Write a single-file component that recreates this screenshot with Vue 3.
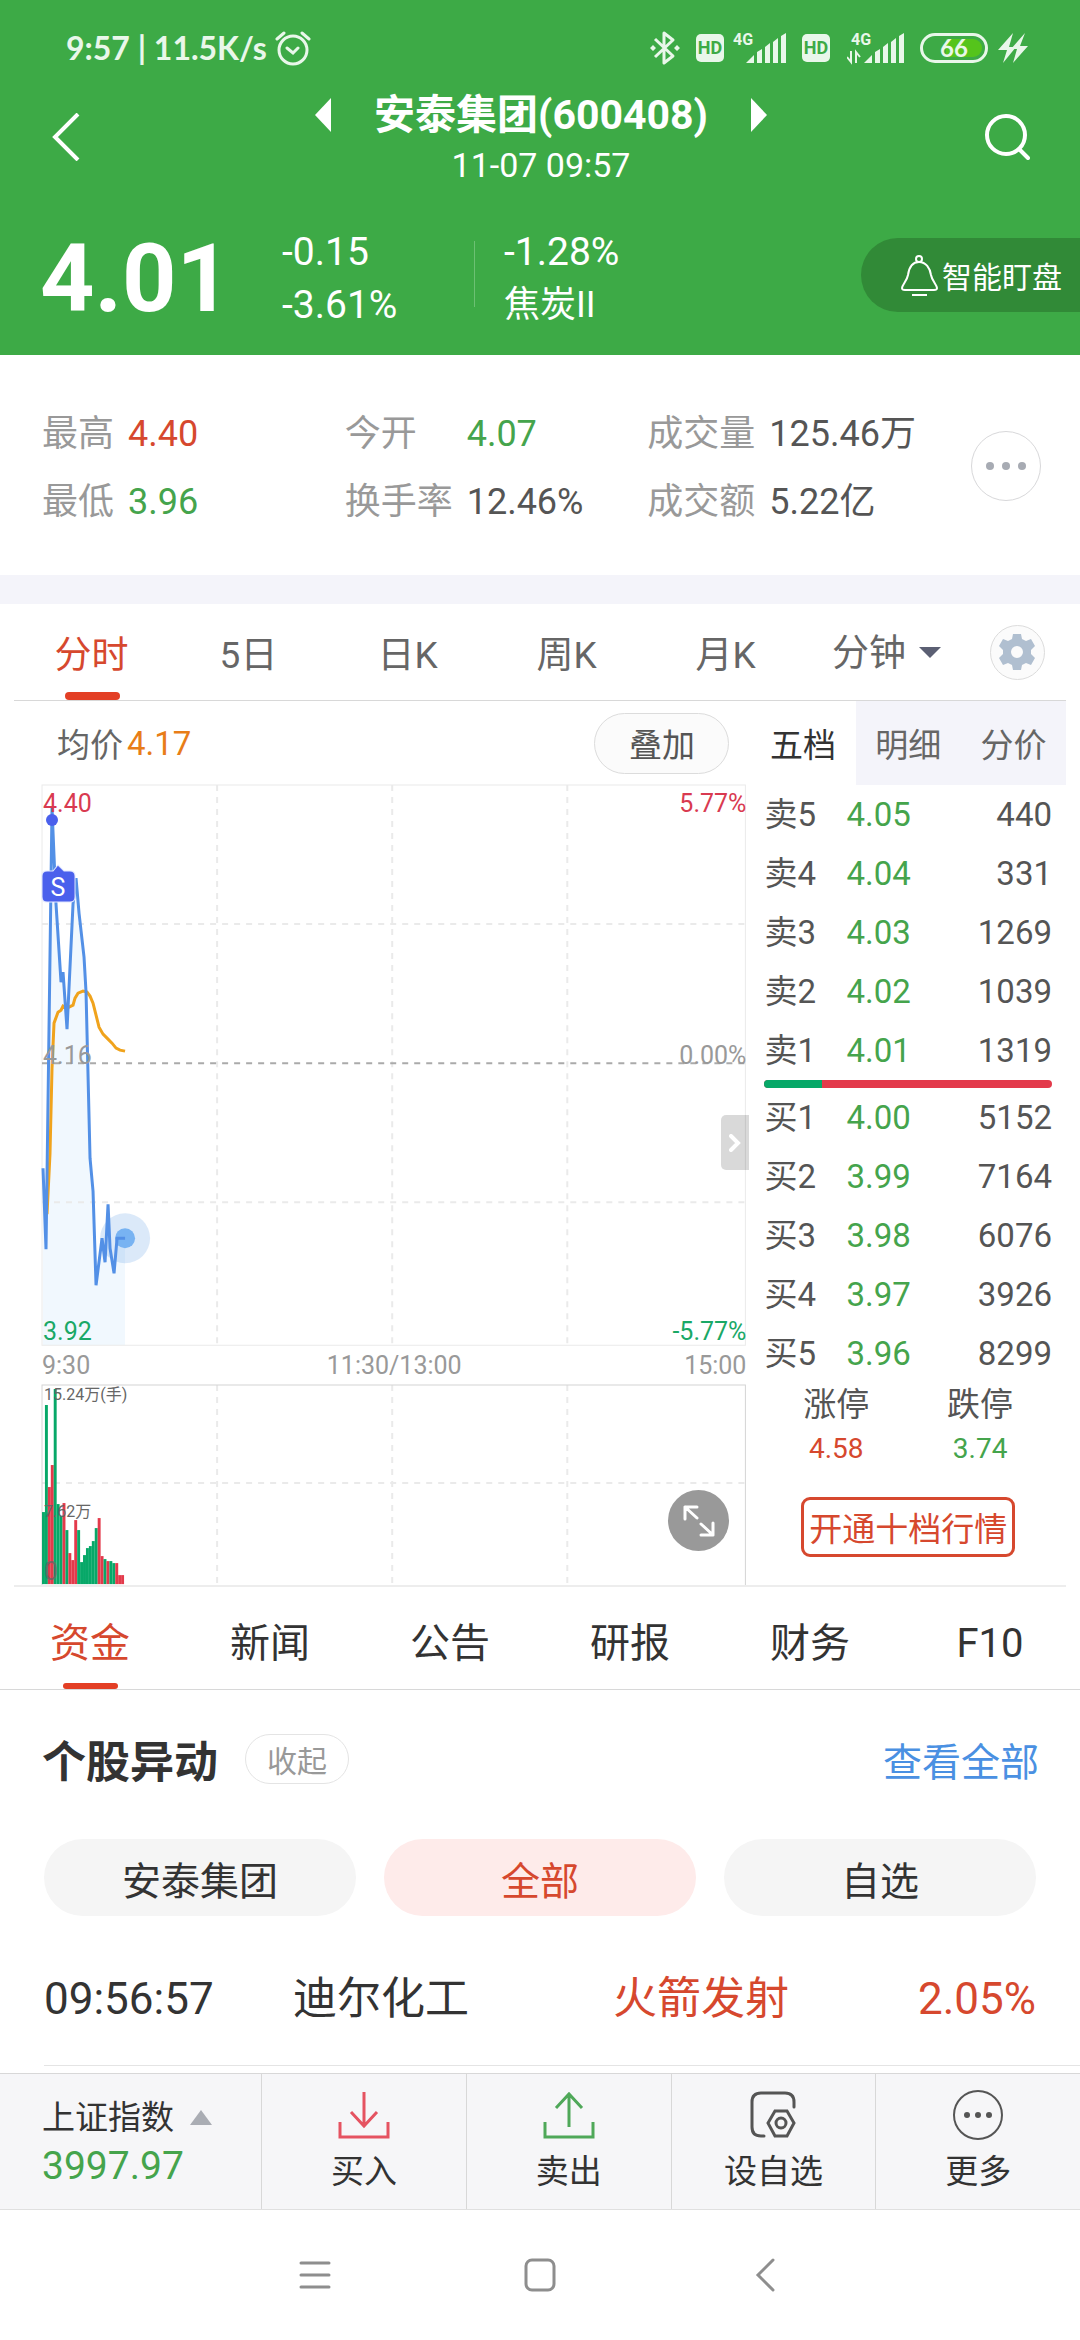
<script setup>
import { ref } from 'vue'

const stats = [
  [
    { label: '最高', value: '4.40', tone: 'up' },
    { label: '最低', value: '3.96', tone: 'down' }
  ],
  [
    { label: '今开', value: '4.07', tone: 'down' },
    { label: '换手率', value: '12.46%', tone: '' }
  ],
  [
    { label: '成交量', value: '125.46万', tone: '' },
    { label: '成交额', value: '5.22亿', tone: '' }
  ]
]

const periods = ['分时', '5日', '日K', '周K', '月K']
const period = ref('分时')

const bookTabs = ['五档', '明细', '分价']
const bookTab = ref('五档')

const asks = [
  ['卖5', '4.05', '440'],
  ['卖4', '4.04', '331'],
  ['卖3', '4.03', '1269'],
  ['卖2', '4.02', '1039'],
  ['卖1', '4.01', '1319']
]
const bids = [
  ['买1', '4.00', '5152'],
  ['买2', '3.99', '7164'],
  ['买3', '3.98', '6076'],
  ['买4', '3.97', '3926'],
  ['买5', '3.96', '8299']
]

// One bar per minute: [height, rising]
const volumes = [
  [72, 0], [179, 0], [97, 1], [119, 1], [195, 0], [80, 0], [68, 0], [81, 1],
  [54, 0], [31, 1], [24, 1], [64, 1], [54, 0], [22, 0], [29, 0], [36, 0],
  [38, 0], [43, 0], [56, 0], [66, 1], [28, 1], [25, 0], [23, 1], [23, 0],
  [21, 0], [21, 1], [9, 1], [9, 1]
]
const barWidth = 82 / volumes.length

const price =
  '1,383 4,464 10,23 14,119 19,197 21,187 25,244 31,119 34,93 37,128 42,172 44,207 48,373 51,406 54,500 60,453 63,477 66,419 68,463 72,488 75,453 83,453'
const average =
  '5,429 8,368 10,283 12,238 16,227 19,225 21,221 25,223 31,220 33,213 36,208 41,206 45,207 48,211 51,218 54,230 57,242 61,249 65,253 70,258 74,263 78,265 83,266'

const sections = ['资金', '新闻', '公告', '研报', '财务', 'F10']
const section = ref('资金')

const filters = ['安泰集团', '全部', '自选']
const filter = ref('全部')
</script>

<template>
  <div class="page">
    <header class="header">
      <div class="status">
        <span class="clock">9:57 | 11.5K/s</span>
        <svg class="alarm" width="36" height="36" viewBox="0 0 36 36" fill="none" stroke="#e9f7ea" stroke-width="3" stroke-linecap="round">
          <circle cx="18" cy="20" r="14" />
          <path d="M12 18l6 5 5-5M2 9l7-6M27 3l7 6" />
        </svg>
        <div class="status-icons">
          <svg width="30" height="36" viewBox="0 0 30 36" fill="none" stroke="#e9f7ea" stroke-width="3" stroke-linejoin="round">
            <path d="M5 9l18 17-9 7V3l9 7L5 27" />
            <path d="M3 15l3 3-3 3-3-3zM27 15l3 3-3 3-3-3z" fill="#e9f7ea" stroke="none" />
          </svg>
          <span class="hd">HD</span>
          <svg class="signal" width="53" height="36" viewBox="0 0 53 36" fill="#e9f7ea">
            <text x="0" y="15" class="net">4G</text>
            <path d="M13 33l8-8v8zM24 22l5-3v14h-5zM32 17l5-4v20h-5zM40 12l5-4v25h-5zM48 6l5-3v30h-5z" />
          </svg>
          <span class="hd">HD</span>
          <svg class="signal-b" width="57" height="36" viewBox="0 0 57 36" fill="#e9f7ea">
            <text x="4" y="15" class="net">4G</text>
            <path d="M17 33l8-8v8zM28 22l5-3v14h-5zM36 17l5-4v20h-5zM44 12l5-4v25h-5zM52 6l5-3v30h-5z" />
            <path d="M4 21v11l-4-5M9 33V22l4 5" fill="none" stroke="#e9f7ea" stroke-width="2" />
          </svg>
          <span class="battery"><b>66</b></span>
          <svg width="30" height="30" viewBox="0 0 30 30" fill="#e9f7ea">
            <path d="M15 0L0 17h9L5 30 18 14h-7zM27 0L13 16h6l-4 14 15-17h-8z" />
          </svg>
        </div>
      </div>

      <div class="titlebar">
        <button class="icon-btn" aria-label="返回">
          <svg width="28" height="48" viewBox="0 0 28 48" fill="none" stroke="#fff" stroke-width="4"><path d="M26 1L3 24l23 23" /></svg>
        </button>
        <div class="title">
          <div class="name">
            <button class="icon-btn" aria-label="上一只">
              <svg width="16" height="34" viewBox="0 0 16 34" fill="#fff"><path d="M16 0v34L0 17z" /></svg>
            </button>
            <h1>安泰集团(600408)</h1>
            <button class="icon-btn" aria-label="下一只">
              <svg width="16" height="34" viewBox="0 0 16 34" fill="#fff"><path d="M0 0v34l16-17z" /></svg>
            </button>
          </div>
          <time>11-07 09:57</time>
        </div>
        <button class="icon-btn" aria-label="搜索">
          <svg width="46" height="48" viewBox="0 0 46 48" fill="none" stroke="#fff" stroke-width="4" stroke-linecap="round">
            <circle cx="22" cy="22" r="19" /><path d="M35 36l9 9" />
          </svg>
        </button>
      </div>

      <div class="quote">
        <strong class="last">4.01</strong>
        <div class="pair"><span>-0.15</span><span>-3.61%</span></div>
        <div class="pair sector"><span>-1.28%</span><span class="small">焦炭II</span></div>
        <button class="watch">
          <svg width="37" height="42" viewBox="0 0 37 42" fill="none" stroke="#fff" stroke-width="2" stroke-linejoin="round">
            <circle cx="18" cy="5" r="3" />
            <path d="M18 8C11 8 8 14 7 21 6 27 1 31 1 34c0 2 1 2 3 2h29c2 0 3 0 3-2 0-3-5-7-6-13C29 14 25 8 18 8zM11 41h15" />
          </svg>
          智能盯盘
        </button>
      </div>
    </header>

    <section class="stats">
      <dl>
        <div v-for="(col, c) in stats" :key="c" class="stat-col" :class="{ wide: c > 0 }">
          <div v-for="s in col" :key="s.label" class="stat">
            <dt>{{ s.label }}</dt>
            <dd :class="s.tone">{{ s.value }}</dd>
          </div>
        </div>
      </dl>
      <button class="more" aria-label="更多数据">
        <svg width="42" height="10" viewBox="0 0 42 10" fill="#a7abb3"><circle cx="5" cy="5" r="4" /><circle cx="21" cy="5" r="4" /><circle cx="37" cy="5" r="4" /></svg>
      </button>
    </section>

    <section class="chart-card">
      <nav class="periods">
        <button v-for="p in periods" :key="p" :class="{ on: p === period }" @click="period = p">{{ p }}</button>
        <div class="minute">
          <select aria-label="分钟周期"><option>分钟</option></select>
          <svg width="22" height="11" viewBox="0 0 22 11" fill="#5b5f73"><path d="M0 0h22L11 11z" /></svg>
        </div>
        <div class="gear-cell">
          <button class="gear" aria-label="图表设置">
            <svg width="36" height="36" viewBox="0 0 36 36" fill="#b0bfd0" fill-rule="evenodd">
              <path d="M14 0h8l1 5 4 2 5-2 4 7-4 4v4l4 4-4 7-5-2-4 2-1 5h-8l-1-5-4-2-5 2-4-7 4-4v-4l-4-4 4-7 5 2 4-2zM18 12a6 6 0 1 0 0 12a6 6 0 1 0 0-12z" />
            </svg>
          </button>
        </div>
      </nav>

      <div class="board">
        <div class="left">
          <div class="avg">
            <span>均价</span>
            <em>4.17</em>
            <button class="overlay-btn">叠加</button>
          </div>

          <div class="plot">
            <svg viewBox="0 0 704 561" class="canvas">
              <polygon :points="price + ' 83,560 1,560'" fill="#f1f8fe" />
              <g fill="none" stroke="#eaeaea" stroke-width="1">
                <path d="M0 560V0H703V560z" />
                <g stroke-width="2">
                  <path d="M0 139H703M0 417H703" stroke-dasharray="6 6" />
                  <path d="M175 0V560M350 0V560M525 0V560" stroke-dasharray="6 6" />
                </g>
                <path d="M0 278H703" stroke="#aaa" stroke-width="2" stroke-dasharray="6 6" />
              </g>
              <circle cx="83" cy="453" r="25" fill="#4a90e2" opacity="0.2" />
              <circle cx="83" cy="453" r="10" fill="#78b3f2" />
              <polyline :points="average" fill="none" stroke="#f0a31c" stroke-width="3" />
              <polyline :points="price" fill="none" stroke="#5390e6" stroke-width="3" />
              <circle cx="10" cy="35" r="6" fill="#4a60ec" />
              <path d="M5 86h6l5-6 6 6h6q5 0 5 5v21q0 5-5 5H5q-5 0-5-5V91q0-5 5-5z" fill="#4a60ec" stroke="#dfe6ff" stroke-width="1" />
              <text x="16" y="111" class="axis" text-anchor="middle" fill="#fff">S</text>
              <g class="axis">
                <text x="1" y="27" fill="#d93a50">4.40</text>
                <text x="1" y="279" fill="#999">4.16</text>
                <text x="1" y="555" fill="#1aa866">3.92</text>
                <g text-anchor="end">
                  <text x="704" y="27" fill="#d93a50">5.77%</text>
                  <text x="704" y="279" fill="#999">0.00%</text>
                  <text x="704" y="555" fill="#1aa866">-5.77%</text>
                </g>
              </g>
            </svg>
            <button class="handle" aria-label="收起盘口">
              <svg width="12" height="18" viewBox="0 0 12 18" fill="none" stroke="#fff" stroke-width="4" stroke-linecap="round"><path d="M2 2l7 7-7 7" /></svg>
            </button>
          </div>

          <div class="times"><span>9:30</span><span>11:30/13:00</span><span>15:00</span></div>

          <div class="plot">
            <svg viewBox="0 0 704 200" class="canvas">
              <g fill="none" stroke="#eaeaea" stroke-width="2">
                <path d="M0 98H703" stroke-dasharray="6 6" />
                <path d="M175 0V200M350 0V200M525 0V200" stroke-dasharray="6 6" />
                <path d="M0 200V0H703V200" stroke="#d4d4d4" stroke-width="1" />
              </g>
              <rect
                v-for="(v, i) in volumes"
                :key="i"
                :x="i * barWidth"
                :y="199 - v[0]"
                :width="barWidth"
                :height="v[0]"
                :fill="v[1] ? '#e33a4b' : '#07a868'"
              />
              <g class="vol-text" fill="#666">
                <text x="2" y="15">15.24万(手)</text>
                <text x="2" y="132">7.62万</text>
                <text x="2" y="195" class="axis" opacity="0.8">0</text>
              </g>
            </svg>
            <button class="expand" aria-label="全屏">
              <svg width="32" height="32" viewBox="0 0 32 32" fill="none" stroke="#fff" stroke-width="3" stroke-linecap="round" stroke-linejoin="round">
                <path d="M2 14V2h12M2 2l12 11M30 18v12H18M30 30L18 19" />
              </svg>
            </button>
          </div>
        </div>

        <div class="right">
          <nav class="book-tabs">
            <button v-for="t in bookTabs" :key="t" :class="{ on: t === bookTab }" @click="bookTab = t">{{ t }}</button>
          </nav>
          <div class="book">
            <table>
              <tbody>
                <tr v-for="r in asks" :key="r[0]"><th>{{ r[0] }}</th><td class="down">{{ r[1] }}</td><td>{{ r[2] }}</td></tr>
              </tbody>
            </table>
            <div class="ratio"><i></i></div>
            <table>
              <tbody>
                <tr v-for="r in bids" :key="r[0]"><th>{{ r[0] }}</th><td class="down">{{ r[1] }}</td><td>{{ r[2] }}</td></tr>
              </tbody>
            </table>
            <div class="limits">
              <div><span>涨停</span><b class="up">4.58</b></div>
              <div><span>跌停</span><b class="down">3.74</b></div>
            </div>
            <button class="level2">开通十档行情</button>
          </div>
        </div>
      </div>
    </section>

    <nav class="sections">
      <button v-for="s in sections" :key="s" :class="{ on: s === section }" @click="section = s">{{ s }}</button>
    </nav>

    <section class="moves">
      <div class="moves-head">
        <h2>个股异动</h2>
        <button class="fold">收起</button>
        <a href="#">查看全部</a>
      </div>
      <div class="filters">
        <button v-for="f in filters" :key="f" :class="{ on: f === filter }" @click="filter = f">{{ f }}</button>
      </div>
      <div class="move">
        <time>09:56:57</time>
        <span>迪尔化工</span>
        <span class="up">火箭发射</span>
        <span class="up">2.05%</span>
      </div>
    </section>

    <footer class="actions">
      <button class="index">
        <span class="index-name">
          上证指数
          <svg width="22" height="15" viewBox="0 0 22 15" fill="#aaadb4"><path d="M0 15h22L11 0z" /></svg>
        </span>
        <span class="index-value">3997.97</span>
      </button>
      <button>
        <svg width="52" height="52" viewBox="0 0 52 52" fill="none" stroke="#e55361" stroke-width="3"><path d="M2 32v15h48V32M26 2v34M13 22l13 14 13-14" /></svg>
        买入
      </button>
      <button>
        <svg width="52" height="52" viewBox="0 0 52 52" fill="none" stroke="#4fa859" stroke-width="3"><path d="M2 32v15h48V32M26 37V4M13 18L26 4l13 14" /></svg>
        卖出
      </button>
      <button>
        <svg width="52" height="52" viewBox="0 0 52 52" fill="none" stroke="#555" stroke-width="3" stroke-linecap="round">
          <path d="M17 46h-3q-9 0-9-9V12q0-9 9-9h24q9 0 9 9v5" />
          <path d="M28 21h12l7 12-7 13H28l-7-13z" />
          <circle cx="34" cy="33" r="5" />
        </svg>
        设自选
      </button>
      <button>
        <svg width="52" height="52" viewBox="0 0 52 52" fill="#555">
          <circle cx="26" cy="25" r="24" fill="none" stroke="#555" stroke-width="2" />
          <circle cx="15" cy="25" r="3" /><circle cx="26" cy="25" r="3" /><circle cx="37" cy="25" r="3" />
        </svg>
        更多
      </button>
    </footer>

    <nav class="system">
      <button aria-label="菜单"><svg width="32" height="32" viewBox="0 0 32 32" stroke="#8e8e8e" stroke-width="3" stroke-linecap="round"><path d="M2 4h28M2 16h28M2 28h28" /></svg></button>
      <button aria-label="主页"><svg width="32" height="34" viewBox="0 0 32 34" fill="none" stroke="#8e8e8e" stroke-width="3"><rect x="2" y="2" width="28" height="30" rx="6" /></svg></button>
      <button aria-label="后退"><svg width="20" height="34" viewBox="0 0 20 34" fill="none" stroke="#8e8e8e" stroke-width="3" stroke-linecap="round"><path d="M18 2L3 17l15 15" /></svg></button>
    </nav>
  </div>
</template>

<style>
body {
  background: #fff;
}
</style>

<style scoped>
.page {
  font-family: Roboto, "Noto Sans CJK SC", sans-serif;
  font-size: 33px;
  color: #333;
  background: #fff;
}
button,
select {
  font: inherit;
  color: inherit;
  background: none;
  border: 0;
  padding: 0;
  margin: 0;
}
svg {
  display: block;
  flex: none;
}
.up {
  color: #d6482e;
}
.down {
  color: #45a44c;
}

/* header */
.header {
  background: #3daa46;
  color: #fff;
}
.status {
  display: flex;
  align-items: center;
  height: 84px;
  padding: 6px 52px 0 66px;
  color: #e9f7ea;
}
.clock {
  font-family: Lato, "Noto Sans", sans-serif;
  font-weight: 700;
  font-size: 32px;
  line-height: 40px;
}
.alarm {
  margin-left: 8px;
}
.status-icons {
  display: flex;
  align-items: center;
  margin-left: auto;
}
.hd {
  margin-left: 16px;
  width: 28px;
  line-height: 28px;
  border-radius: 5px;
  background: #e9f7ea;
  color: #3daa46;
  font-size: 18px;
  font-weight: 700;
  text-align: center;
}
.net {
  font-size: 16px;
  font-weight: 700;
}
.signal {
  margin-left: 9px;
}
.signal-b {
  margin-left: 17px;
}
.battery {
  box-sizing: border-box;
  width: 68px;
  height: 30px;
  margin: 0 10px 0 16px;
  border: 3px solid #e9f7ea;
  border-radius: 15px;
  padding: 3px;
}
.battery b {
  display: block;
  border-radius: 9px;
  background: linear-gradient(90deg, transparent 35%, #55c41b 35%);
  font-family: Lato, sans-serif;
  font-size: 24px;
  line-height: 18px;
  text-align: center;
}
.titlebar {
  display: flex;
  align-items: center;
  justify-content: space-between;
  padding: 0 50px 0 52px;
}
.titlebar > .icon-btn {
  width: 46px;
  padding-bottom: 6px;
}
.title {
  text-align: center;
}
.name {
  display: flex;
  align-items: center;
  gap: 43px;
  line-height: 50px;
}
h1 {
  margin: 0;
  font-size: 41px;
  font-weight: 700;
}
.title time {
  display: block;
  font-size: 34px;
  line-height: 50px;
}
.quote {
  display: grid;
  grid-template-columns: 242px 192px 1fr auto;
  align-items: center;
  padding: 28px 0 23px 40px;
}
.last {
  padding-top: 8px;
  font-size: 95px;
  line-height: 106px;
}
.pair {
  display: flex;
  flex-direction: column;
  padding-top: 8px;
  font-size: 39px;
  line-height: 53px;
}
.small {
  font-size: 36px;
}
.sector {
  position: relative;
  padding-left: 30px;
}
.sector::before {
  content: "";
  position: absolute;
  left: 0;
  top: 23px;
  bottom: 25px;
  width: 1px;
  background: #6cc073;
}
.watch {
  display: flex;
  align-items: center;
  gap: 4px;
  height: 74px;
  padding: 0 18px 0 40px;
  border-radius: 37px 0 0 37px;
  background: #318a37;
  font-size: 30px;
}

/* key figures */
.stats {
  display: flex;
  align-items: center;
  padding: 40px 39px 39px 42px;
}
.stats dl {
  flex: 1;
  display: grid;
  grid-template-columns: repeat(3, 1fr);
  margin: 0 21px 0 0;
  padding-top: 5px;
}
.stat {
  display: flex;
  gap: 14px;
  font-size: 36px;
  line-height: 68px;
  white-space: nowrap;
}
.stat dt {
  color: #999;
}
.wide dt {
  min-width: 108px;
}
.stat dd {
  margin: 0;
}
.stat dd:not(.up):not(.down) {
  color: #555;
}
.more {
  display: flex;
  align-items: center;
  justify-content: center;
  width: 70px;
  height: 70px;
  border: 1px solid #d8d8da;
  border-radius: 50%;
}

/* chart */
.chart-card {
  border-top: 29px solid #f4f4fa;
  padding: 0 14px;
}
.periods {
  display: grid;
  grid-template-columns: 155fr 159fr 159fr 159fr 159fr 163fr 98fr;
  height: 96px;
  border-bottom: 1px solid #d8d8d8;
  font-size: 37px;
  color: #666;
}
.periods > button,
.sections button {
  position: relative;
}
.on {
  color: #d6482e;
}
.periods > .on::after,
.sections .on::after {
  content: "";
  position: absolute;
  left: 50%;
  bottom: 0;
  width: 55px;
  height: 8px;
  margin-left: -27px;
  border-radius: 4px;
  background: #e33f25;
}
.minute,
.gear-cell {
  display: flex;
  align-items: center;
  justify-content: center;
  gap: 13px;
}
.minute select {
  appearance: none;
  padding-top: 3px;
}
.gear {
  display: flex;
  align-items: center;
  justify-content: center;
  width: 55px;
  height: 55px;
  border: 1px solid #dcdcdc;
  border-radius: 50%;
  background: #fbfbfb;
}
.board {
  display: flex;
}
.left {
  flex: 1;
  padding: 0 4px 0 28px;
}
.avg {
  display: flex;
  align-items: center;
  gap: 4px;
  height: 84px;
  padding: 0 17px 0 15px;
  color: #666;
}
.avg em {
  font-style: normal;
  color: #e87d18;
}
.overlay-btn {
  width: 135px;
  height: 61px;
  margin-left: auto;
  border: 1px solid #dcdcdc;
  border-radius: 31px;
  background: #fbfbfb;
  color: #555;
}
.plot {
  position: relative;
}
.canvas {
  width: 100%;
  height: auto;
  overflow: visible;
}
.axis {
  font-size: 25px;
}
.vol-text {
  font-size: 16px;
}
.handle {
  position: absolute;
  right: -3px;
  top: 330px;
  display: flex;
  align-items: center;
  justify-content: center;
  width: 28px;
  height: 55px;
  border-radius: 5px 0 0 5px;
  background: rgba(0, 0, 0, 0.15);
}
.times {
  display: grid;
  grid-template-columns: 1fr auto 1fr;
  font-size: 25px;
  line-height: 39px;
  color: #999;
}
.times span:last-child {
  text-align: right;
}
.expand {
  position: absolute;
  right: 17px;
  bottom: 34px;
  display: flex;
  align-items: center;
  justify-content: center;
  width: 61px;
  height: 61px;
  border-radius: 50%;
  background: #999;
}
.right {
  width: 30%;
}
.book-tabs {
  display: grid;
  grid-template-columns: repeat(3, 1fr);
  height: 84px;
}
.book-tabs button {
  background: #f4f4fa;
  color: #666;
}
.book-tabs .on {
  background: #fff;
  color: #333;
}
.book {
  padding: 0 14px;
}
table {
  width: 100%;
  border-collapse: collapse;
  color: #555;
}
th,
td {
  padding: 0;
  height: 59px;
  line-height: 59px;
  text-align: left;
  font-weight: 400;
}
th {
  width: 82px;
}
td:last-child {
  text-align: right;
}
td.down {
  color: #45a44c;
}
.ratio {
  height: 8px;
  border-radius: 4px;
  background: #e33a4b;
  overflow: hidden;
}
.ratio i {
  display: block;
  width: 20%;
  height: 8px;
  background: #07a868;
}
.limits {
  display: grid;
  grid-template-columns: 1fr 1fr;
  text-align: center;
  line-height: 44px;
  color: #555;
}
.limits span,
.limits b {
  display: block;
}
.limits b {
  font-size: 28px;
  font-weight: 400;
}
.level2 {
  display: block;
  width: 214px;
  height: 60px;
  margin: 26px auto 0;
  border: 3px solid #d6482e;
  border-radius: 9px;
  color: #d6482e;
  white-space: nowrap;
}

/* lower tabs */
.sections {
  display: grid;
  grid-template-columns: repeat(6, 1fr);
  height: 104px;
  border-bottom: 1px solid #d8d8d8;
  position: relative;
  font-size: 40px;
  line-height: 48px;
}
.sections::before {
  content: "";
  position: absolute;
  left: 14px;
  right: 14px;
  top: 0;
  height: 2px;
  background: #ededed;
}
.sections button {
  padding-top: 14px;
}
.sections .on::after {
  height: 6px;
}

/* unusual moves */
.moves {
  padding-left: 42px;
}
.moves-head {
  display: flex;
  align-items: center;
  height: 138px;
  padding-right: 41px;
}
h2 {
  margin: 0 27px 0 0;
  font-size: 44px;
  font-weight: 700;
}
.fold {
  width: 104px;
  height: 50px;
  border: 1px solid #e4e4e4;
  border-radius: 25px;
  color: #999;
  font-size: 30px;
}
.moves-head a {
  margin-left: auto;
  font-size: 39px;
  color: #4a90e2;
  text-decoration: none;
}
.filters {
  display: grid;
  grid-template-columns: repeat(3, 1fr);
  gap: 28px;
  padding: 11px 44px 0 2px;
}
.filters button {
  height: 77px;
  border-radius: 39px;
  background: #f5f5f5;
  font-size: 39px;
}
.filters .on {
  background: #feebea;
  color: #d6482e;
}
.move {
  display: grid;
  grid-template-columns: 249px 320px 1fr auto;
  margin-left: 2px;
  padding: 24px 44px 7px 0;
  border-bottom: 1px solid #e4e4e4;
  font-size: 44px;
  line-height: 118px;
}

/* bottom action bar */
.actions {
  display: flex;
  height: 135px;
  margin-top: 7px;
  border-top: 1px solid #d8d8d8;
  border-bottom: 1px solid #e0e0e0;
  background: #f6f6f8;
}
.actions button {
  flex: 1;
  display: flex;
  flex-direction: column;
  align-items: center;
  justify-content: center;
  gap: 8px;
  border-left: 1px solid #d8d8d8;
  line-height: 44px;
}
.actions .index {
  flex: none;
  width: 261px;
  border-left: 0;
  align-items: flex-start;
  padding-left: 42px;
  gap: 4px;
}
.index-name {
  display: flex;
  align-items: center;
  gap: 16px;
}
.index-value {
  font-size: 39px;
  color: #45a44c;
}

/* system navigation */
.system {
  display: grid;
  grid-template-columns: repeat(3, 225px);
  justify-content: center;
  height: 129px;
}
.system button {
  display: flex;
  align-items: center;
  justify-content: center;
}
</style>
